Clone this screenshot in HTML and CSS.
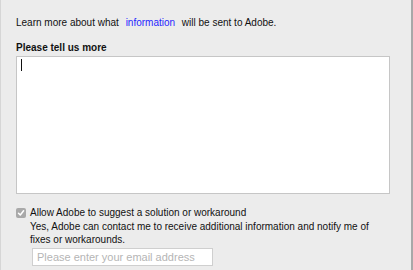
FILE: index.html
```html
<!DOCTYPE html>
<html>
<head>
<meta charset="utf-8">
<link rel="stylesheet" href="styles.css">
</head>
<body>
<div class="panel">
  <p class="intro">Learn more about what <a class="link" href="#">information</a> will be sent to Adobe.</p>
  <div class="label">Please tell us more</div>
  <div class="textarea"><span class="caret"></span></div>
  <div class="allow">
    <span class="checkbox">
      <svg width="8" height="8" viewBox="0 0 8 8"><path d="M1.5 4.2 L3.3 6 L6.6 1.8" fill="none" stroke="#fff" stroke-width="1.5" stroke-linecap="round" stroke-linejoin="round"/></svg>
    </span>
    <span class="allow-text">Allow Adobe to suggest a solution or workaround</span>
  </div>
  <p class="yes">Yes, Adobe can contact me to receive additional information and notify me of fixes or workarounds.</p>
  <div class="email">Please enter your email address</div>
</div>
</body>
</html>
```
FILE: styles.css
```css
html, body {
  margin: 0;
  padding: 0;
}
body {
  width: 413px;
  height: 270px;
  overflow: hidden;
  background: #ececec;
  font-family: "Liberation Sans", Arial, sans-serif;
  font-size: 10px;
  color: #111;
}
.panel {
  box-sizing: border-box;
  width: 413px;
  height: 270px;
  border-left: 1px solid #d6d6d6;
  border-right: 2px solid #a8a8a8;
  padding: 16px 21px 0 15px;
}
.intro {
  margin: 0;
  line-height: 14px;
}
.link {
  color: #2626ff;
  text-decoration: none;
  margin: 0 4px;
}
.label {
  margin-top: 11px;
  font-weight: bold;
  line-height: 14px;
}
.textarea {
  box-sizing: border-box;
  margin-top: 1px;
  height: 138px;
  background: #fff;
  border: 1px solid #c6c6c6;
  padding: 2px 4px;
}
.caret {
  display: block;
  width: 1px;
  height: 12px;
  background: #111;
}
.allow {
  margin-top: 12px;
  display: flex;
  align-items: center;
  gap: 4px;
  line-height: 14px;
}
.checkbox {
  box-sizing: border-box;
  width: 10px;
  height: 10px;
  border-radius: 2px;
  background: #a9a9a9;
  display: flex;
  align-items: center;
  justify-content: center;
}
.yes {
  margin: 0 0 0 14px;
  line-height: 13px;
  max-width: 345px;
}
.email {
  box-sizing: border-box;
  margin: 2px 0 0 16px;
  width: 181px;
  height: 18px;
  background: #fff;
  border: 1px solid #cfcfcf;
  padding: 0 4px;
  line-height: 16px;
  color: #b5b5b5;
  font-size: 11px;
}
```
